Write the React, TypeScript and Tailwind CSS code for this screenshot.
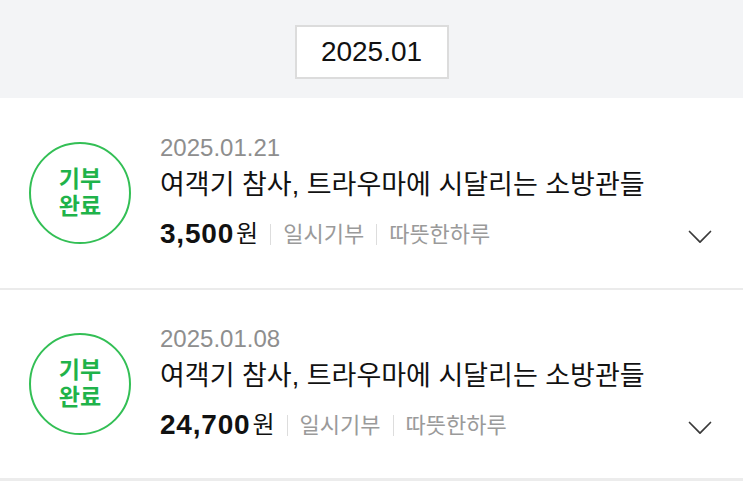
const FONT = "font-['Liberation_Sans','Noto_Sans_CJK_KR',sans-serif]";

type Donation = { date: string; title: string; amount: string };

const DONATIONS: Donation[] = [
  { date: '2025.01.21', title: '여객기 참사, 트라우마에 시달리는 소방관들', amount: '3,500' },
  { date: '2025.01.08', title: '여객기 참사, 트라우마에 시달리는 소방관들', amount: '24,700' },
];

function Chevron() {
  return (
    <svg width="24" height="14" viewBox="0 0 24 14" fill="none">
      <polyline points="1.5,1.5 12,12.2 22.5,1.5" stroke="#3a3a3a" strokeWidth="1.7" strokeLinecap="round" strokeLinejoin="round" />
    </svg>
  );
}

function DonationRow({ d, height }: { d: Donation; height: string }) {
  return (
    <div className={`flex items-center bg-white pl-[29px] pr-[31px] ${height}`}>
      {/* status badge */}
      <div className="flex h-[102px] w-[102px] shrink-0 flex-col items-center justify-center rounded-full border-2 border-[#33bf55]">
        <div className="text-[23px] font-semibold leading-[27px] text-[#1fb34a]">기부</div>
        <div className="text-[23px] font-semibold leading-[27px] text-[#1fb34a]">완료</div>
      </div>

      <div className="ml-[29px] flex flex-1 flex-col pb-[4px]">
        <div className="text-[24px] leading-[36px] text-[#8e8e8e]">{d.date}</div>
        <div className="text-[27px] leading-[38px] text-[#111111]">{d.title}</div>
        <div className="mt-[12px] flex h-[36px] items-center">
          <span className="text-[28px] font-bold tracking-[0.8px] text-[#111111]">{d.amount}</span>
          <span className="ml-[2px] text-[24px] text-[#111111]">원</span>
          <span className="mx-[12px] h-[21px] w-px bg-[#dddddd]" />
          <span className="text-[22px] text-[#9a9a9a]">일시기부</span>
          <span className="mx-[12px] h-[21px] w-px bg-[#dddddd]" />
          <span className="text-[22px] text-[#9a9a9a]">따뜻한하루</span>
          <div className="ml-auto mt-[6px] flex">
            <Chevron />
          </div>
        </div>
      </div>
    </div>
  );
}

export default function App() {
  return (
    <div className={`h-[481px] w-[743px] overflow-hidden bg-[#ececec] ${FONT}`}>
      {/* month selector */}
      <div className="flex h-[98px] items-center justify-center bg-[#f3f4f6] pt-[6px]">
        <div className="flex h-[54px] w-[154px] items-center justify-center border-2 border-[#dcdcdc] bg-white text-[28px] text-[#111111]">
          2025.01
        </div>
      </div>

      <DonationRow d={DONATIONS[0]} height="h-[190px]" />
      <div className="h-[2px] bg-[#ebebeb]" />
      <DonationRow d={DONATIONS[1]} height="h-[188px]" />
    </div>
  );
}
